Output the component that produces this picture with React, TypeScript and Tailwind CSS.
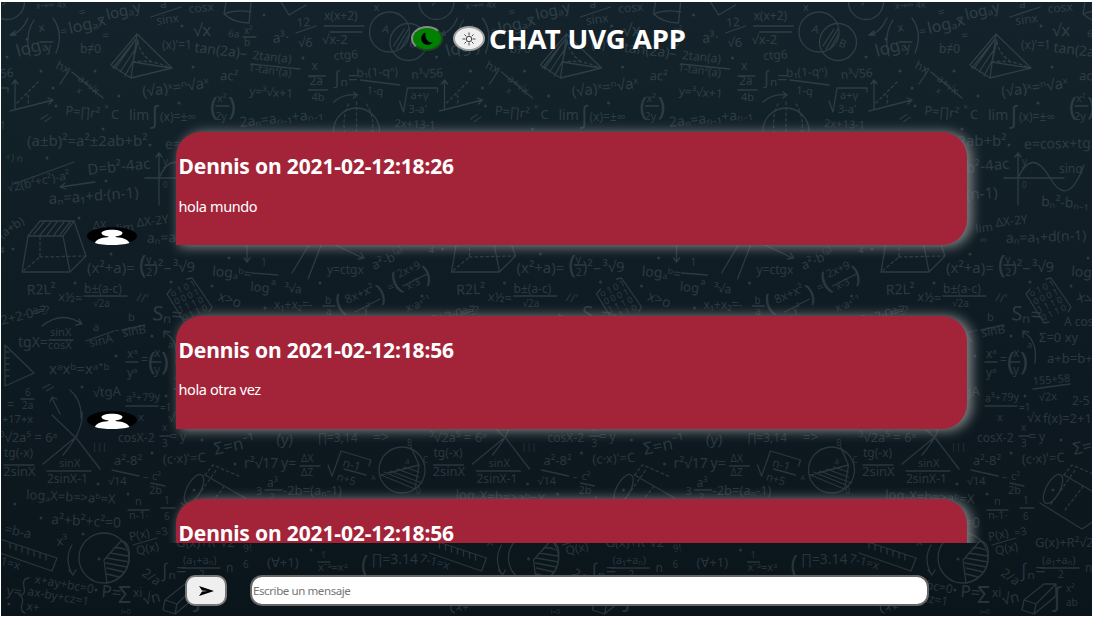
import React from "react";

type Note = [x: number, y: number, text: string, size?: number, rotate?: number];

const NOTES: Note[] = [
  [36, 9, "x→∞  4x", 9, -3],
  [18, 57, "logₐ", 17, -16], [39, 32, "x", 12, -10], [46, 52, "y", 12, -10], [61, 36, "=", 12, -12],
  [70, 34, "logₐx", 16, -14], [99, 22, "- logₐy", 15, -14],
  [80, 53, "b≠0", 12], [160, 8, "a", 12], [157, 25, "sinx", 12, -8], [189, 13, "cosx", 12, -5],
  [193, 36, "√x", 17], [162, 49, "(x)'=1", 12], [194, 52, "tan(2a)–", 14, 7],
  [252, 59, "2tan(a)", 12, 6], [248, 71, "1-tan²(a)", 11, 8], [228, 37, "6a", 10, 3], [244, 34, "x²", 10], [244, 46, "b", 10],
  [273, 43, "a³·", 14, -5], [297, 27, "12", 12, -5], [298, 47, "√6", 13], [324, 20, "x(x+2)", 12], [322, 44, "√x-2", 13], [334, 60, "ctg6", 12, -4],
  [803, 11, "x", 11], [741, 70, "x", 12], [739, 85, "2a", 12], [741, 101, "4b", 11],
  [763, 84, "∫ₙ=", 18], [786, 77, "b₁(1-qⁿ)", 12, -2], [796, 94, "1-q", 11, 4], [841, 79, "n³√56", 12, -4],
  [840, 99, "a+γ", 11], [838, 113, "3-a'", 11], [824, 127, "2x+13-1", 11, 3],
  [811, 32, "A", 11, 15], [838, 46, "B", 11, 20],
  [55, 68, "hx", 12, 25], [77, 80, "a+√x", 11, 38], [76, 92, "x", 9, 30], [104, 110, "×", 9],
  [143, 97, "(√a)ˣ=ⁿ√aˣ", 15, -8], [220, 80, "ac²", 13, 2], [249, 95, "y=³√x+1", 12, 4],
  [210, 115, "(", 26], [217, 102, "x²", 11], [215, 120, "2y", 11], [228, 115, ")", 26],
  [65, 115, "P=∏r²", 13, 5], [111, 119, "C", 13], [129, 120, "lim", 14], [150, 123, "∫", 24], [160, 121, "(x)=±∞", 12],
  [240, 127, "2aₙ=aₙ₋₁+aₙ₋₁", 14, -6],
  [27, 146, "(a±b)²=a²±2ab+b²", 15], [165, 149, "e=cosx+tgx", 14, -1], [88, 175, "D=b²-4ac", 15, -6],
  [8, 192, "√2(b²+c²)-a²", 12, -12], [49, 204, "aₙ=a₁+d·(n-1)", 15, -4], [163, 165, "y", 10], [163, 188, "0", 8], [200, 173, "sinα", 12],
  [182, 206, "bₙ²-bₙ₋₁", 14, 3], [5, 160, "÷)  n", 10, 8],
  [2, 239, "(a+b)", 12, -35], [93, 229, "ΔX", 11], [117, 233, "lim", 12, -8], [137, 227, "ΔX-2Y", 12, -7], [121, 244, "∞", 11],
  [147, 243, "aₙ=a₁+d(n-1)", 14, -2],
  [87, 273, "(x²+a)=", 15], [139, 273, "(", 25], [146, 263, "y", 11], [146, 276, "2", 11], [153, 273, ")²–", 16], [173, 272, "³√9", 15],
  [212, 276, "logₐᵇ=", 14, 4], [261, 266, "1", 10], [250, 291, "log", 13, 5], [271, 285, "a", 9], [284, 292, "³√a", 12, 5],
  [327, 274, "y=ctgx", 12], [374, 270, "a²-b⁽ˣ⁾", 13, -24], [339, 313, "(", 26, -20], [347, 304, "8x+x²", 12, -24], [364, 313, "y²", 10, -20], [380, 302, ")", 24, -20], [389, 292, "=", 12, -20],
  [396, 291, "(", 26, -25], [399, 278, "2x+9", 11, -25], [408, 290, "x-3", 10, -25], [425, 283, ")", 24, -15], [429, 259, "⁴", 14],
  [274, 309, "x₁+x₂=-", 12], [325, 304, "b", 10], [326, 315, "a", 10], [217, 300, "x>o", 14, 20], [407, 312, "x·aˣ⁻¹", 11, -20], [32, 314, "a=?", 11],
  [27, 295, "R2L²", 14, -3], [58, 301, "x½=", 13, 4], [84, 293, "b±(a-c)", 12], [93, 307, "√2a", 10],
  [152, 320, "Sₙ=", 20, 4], [2, 325, "2+2·0=?", 13, -14],
  [18, 347, "tgX=", 14], [50, 336, "sinX", 11], [48, 349, "cosX", 11], [93, 331, "a", 11], [90, 347, "sinA", 12, -12],
  [115, 334, "-", 12], [128, 321, "b", 11], [123, 337, "sinB", 12, -10],
  [205, 326, "A  cos", 12], [180, 342, "Σ=0  xy", 13], [188, 363, "a+b=b+a", 13], [174, 385, "155+58", 11, -5], [180, 401, "√2x", 11, -3], [213, 405, "2-5", 12],
  [127, 358, "xᵃ", 12], [127, 377, "yᵃ", 12], [141, 364, "=", 12], [148, 370, "(", 26], [154, 357, "x", 12], [154, 374, "y", 12], [161, 370, ")", 26], [168, 352, "ᵃ", 14],
  [49, 374, "xᵃxᵇ=xᵃ⁺ᵇ", 15], [25, 396, "6", 10], [22, 409, "2a", 10], [93, 397, "√tgA", 13, -3], [126, 402, "a³+79y", 11, -3], [160, 411, "=1", 10],
  [2, 423, "+17+x", 11], [0, 442, "³√2a⁵ = 6ᵃ", 13], [92, 450, "|||", 9], [118, 442, "cosX-2", 12], [162, 431, "x", 10], [162, 447, "3", 10], [170, 441, "= y", 12],
  [138, 421, "x", 11], [184, 423, "f(x)=2+1", 13], [168, 422, "√x", 13],
  [215, 455, "Σ=n⁻¹", 17, -12], [276, 444, "(y)", 15, 5], [318, 442, "∏=3,14", 12], [373, 442, "=>", 14],
  [4, 457, "tg(-x)", 12], [3, 476, "2sinX", 13], [59, 467, "sinX", 11], [47, 483, "2sinX-1", 12],
  [114, 465, "a²-8²", 13], [108, 485, "√14", 11], [143, 480, "–", 10], [152, 480, "c²", 11], [149, 494, "2b", 11], [163, 464, "(c·x)'=C", 13, -3],
  [244, 468, "r²√17", 14], [281, 468, "y=", 14], [301, 462, "ΔX", 10], [301, 476, "ΔZ", 10], [342, 466, "n-1", 12, 17], [336, 480, "n+5", 11, 17],
  [256, 495, "3", 11], [267, 487, "a³", 12], [269, 501, "2", 10], [283, 495, "-2b=(aₙ-1)", 13],
  [371, 480, "A", 7], [407, 446, "B", 8], [423, 463, "C", 8], [405, 464, "a", 8], [416, 494, "0", 8],
  [26, 499, "logₐX=b=>aᵇ=X", 13, 3], [135, 505, "n", 11], [129, 519, "n-1·", 11], [164, 504, "1", 10], [164, 520, "6", 10],
  [51, 524, "a²+b²+c²=0", 14, 3], [4, 533, "=b-a", 13, 12], [57, 546, "x³", 13, -8],
  [130, 541, "P(x)", 12, -12], [137, 555, "Q(x)", 12, -12], [156, 537, "=3", 11, -12], [176, 547, "G(x)+R²√2", 13],
  [161, 577, "∫ₙ=", 19], [183, 564, "(a₁+aₙ)", 11], [199, 578, "2", 10], [226, 572, "n", 12], [141, 575, "2/a", 13, 35],
  [244, 552, "9!", 10, -10], [243, 568, "6", 10], [267, 567, "(∀+1)", 13], [321, 558, "1", 9], [318, 571, "x⁻ᵃ=xᵃ", 11], [361, 573, "(", 25],
  [372, 564, "∏=3.14", 14], [419, 562, "7-1=x", 12, 15],
  [6, 595, "y=", 14, 8], [34, 583, "x+ay+bc=0", 12, 10], [27, 595, "ax-by+cz=1", 12, 10], [26, 610, "x+", 12, 8],
  [101, 597, "P=", 17, 5], [118, 603, "Σ", 23], [133, 597, "xi", 12], [121, 614, "i=0", 7], [144, 605, "√n", 15, -12], [193, 606, "∫", 26], [207, 592, "x²", 10], [207, 606, "ab", 10],
  [7, 409, "=", 12], [103, 40, "=", 12, -10], [40, 119, "//", 12, 35], [42, 388, "//", 12, 40], [136, 301, "//'", 12, 10], [80, 17, "=", 12, -15],
];

const DOTS: [number, number][] = [
  [27, 39], [7, 57], [41, 71], [53, 88], [56, 106], [95, 71], [119, 96], [182, 26], [193, 67], [264, 15], [303, 58], [179, 103], [103, 129], [47, 158],
  [150, 145], [106, 181], [79, 218], [13, 249], [111, 254], [75, 283], [171, 282], [212, 286], [229, 258], [320, 283], [422, 296], [265, 308], [152, 336],
  [116, 356], [82, 387], [166, 396], [202, 440], [235, 464], [152, 453], [98, 484], [15, 504], [128, 494], [41, 518], [194, 490], [83, 534], [96, 590], [9, 604], [311, 550], [99, 559],
];

const STROKES =
  "M28 18Q22 32 11 35M15 31l-5 4 6 0M137 34L111 65 131 78 172 68ZM137 34L131 78M134 42l-19 27M136 39l-23 29M134 51l-14 21M133 61l-8 15M138 40L133 62 171 68M151 17L181 7M251 64L300 69M243 37h13M296 33l20-7M324 26h40M330 32h32M226 2l-2 12q10 9 25 9l2-20M224 14q12-5 27-2M281 2l8 13 17-10M40 42h13M34 20q-10 15-4 36M53 18q11 15 3 35" +
  "M15 109L15 81M12 84l3-4 3 4M10 111L53 100M48 98l5 2-4 4M738 76h17M738 90h19M790 80L829 85M829 101l4 11 4-24 30 0 0 4M763 102q10-9 24-7M783 92l4 3-4 3M70 69l-10 15M72 72l31 26M216 106h13" +
  "M95 182L60 187M65 183l-5 4 6 2M159 205V153M156 157l3-4 3 4M145 178h60M159 178Q173 147 191 178T225 165M14 184L74 162" +
  "M28 236H63L74 221H40ZM28 236L22 272H70L63 236M70 272L86 256 74 221M34 234l10-12M40 235l11-13M47 235l10-13M54 235l10-13M60 235l10-13M145 265h10M252 273L278 275M247 230V262M244 258l3 4 3-4M292 273l18-30M308 279l17-44M325 240l38 18M358 259l6-1-3-5M355 312l25-13M403 286l24-12M323 306h12M84 296h43" +
  "M42 326Q62 310 82 324M79 319l3 5-6 1M49 340h24M86 341l28-10M122 330l23-5M126 362h12M151 362h10M5 345L34 373 5 386ZM6 352h3M6 358h3M6 364h3M6 370h3M6 376h3M21 399h13M126 406h32M164 332q15 8 12 31M164 337v-6l6 1M174 389l37-5M70 390q12 10 11 28M52 398l8 16M50 402l2-5 5 2" +
  "M52 415L77 439 100 469M82 412Q84 430 63 455M77 436L43 464M160 436h11M4 465h30M47 471h44M112 470l27 6M151 483l14 3M300 466h20M328 465l4 11 9-25 30 9-2 6M344 469l22 6M265 490h17M128 510h21M161 508h14M133 545l24-7M318 562h12M182 568h38M29 578q-7 0-5 9t-5 8q5 2 3 9t3 9" +
  "M0 539L57 558 52 571 0 553M10 543v5M16 545v5M22 547v5M28 549v5M34 551v5M40 553v5M46 555v5M104 560L121 541M104 560L107 583M107 583Q127 578 129 560T121 541M114 548q7-1 12 2M110 553l18 3M107 558l22 4M106 563l21 4M107 568l17 4M107 574l12 3M72 545q-8 14 0 29M69 570l4 5 3-5" +
  "M205 475L245 498M181 503L223 529M245 498q2 17-22 31M381 475L415 489M381 475l38-10M411 447l8 18-4 24M384 472l35 14M390 471l32 12M397 469l22 8M404 467l15 5M165 600l20-16 12 0 0 12-22 18-12-4ZM165 600l12 4 20-20M177 604l-2 10";

const MATRIX = ["o101", "0001", "1110", "0110"];

function Doodles() {
  return (
    <svg className="absolute inset-0 h-full w-full" viewBox="1 2 1091 614" aria-hidden="true">
      <defs>
        <g id="formulas" fill="none" stroke="#899a9e" strokeWidth="1.3" strokeLinecap="round" strokeLinejoin="round">
          <path d={STROKES} />
          <circle cx="7" cy="2" r="17.5" />
          <circle cx="-40" cy="32" r="20" />
          <circle cx="-21" cy="42" r="18.5" />
          <path d="M-36 46l11-17M-33 49l12-20M-29 49l8-14" />
          <path d="M-96 131a23 23 0 1 1 46 0" />
          <circle cx="104" cy="558" r="25" />
          <circle cx="402" cy="470" r="23" />
          <ellipse cx="194" cy="489" rx="7" ry="16" transform="rotate(28 194 489)" />
          <g strokeDasharray="2.5 3">
            <path d="M17 103L38 82M28 103q2-6-2-10M138 42q2 12 14 20M133 62q20-3 37 6M-81 104q-6 12-4 28M-73 102v30M-63 104q8 12 6 28M40 237v20L22 272M40 257l45-1M205 475l8-10 28 12M192 504l25-35M206 510l20-26M3 5l9-9" />
          </g>
          <path d="M171 289l-4 5 18 29 5-1M187 279l5-1 20 29-3 5" />
          <g fill="#899a9e" stroke="none" style={{ fontFamily: '"Noto Sans", "Open Sans", "DejaVu Sans", sans-serif' }}>
            {NOTES.map(([x, y, text, size = 12, rotate = 0], i) => (
              <text key={i} x={x} y={y} fontSize={size} transform={`rotate(${rotate} ${x} ${y})`}>{text}</text>
            ))}
            {MATRIX.map((row, i) => (
              <text key={i} x={172 + i * 4} y={297 + i * 8} fontSize="9" letterSpacing="2" transform={`rotate(-25 ${172 + i * 4} ${297 + i * 8})`}>{row}</text>
            ))}
            {DOTS.map(([x, y], i) => <circle key={i} cx={x} cy={y} r="1.5" />)}
          </g>
        </g>
      </defs>
      <g opacity="0.23">
        {[-859, -429.5, 0, 429.5, 859].map((x) => <use key={x} href="#formulas" x={x} />)}
      </g>
    </svg>
  );
}

function Avatar() {
  return (
    <svg className="h-[18px] w-[50px] shrink-0" viewBox="0 0 50 18">
      <ellipse cx="25" cy="9" rx="25" ry="9" fill="#000" />
      <path d="M8 16C9 12.5 14 10.5 20.5 10.2L22 9.6C17 9 14.5 7.5 14.5 6C14.5 4 19 2.7 25 2.7S35.500 4 35.500 6C35.500 7.500 33 9 28 9.600L29.500 10.200C36 10.500 41 12.500 42.500 16C38 17.500 31 18 25 18S12 17.500 8 16Z" fill="#fff" />
    </svg>
  );
}

function Message({ title, body }: { title: string; body: string }) {
  return (
    <article className="flex h-[113px] shrink-0 items-end gap-[39px] pl-[86px]">
      <Avatar />
      <div className="h-full w-[791px] rounded-[25px] rounded-bl-none bg-[#a32439] pl-[2.500px] pt-[19.400px] text-white shadow-[4px_1px_12px_1px_#808586]">
        <h2 className="h-[30px] whitespace-nowrap text-[21px] font-bold leading-[30px] tracking-[-0.140px]">{title}</h2>
        <p className="mt-[13.500px] text-[14.500px] leading-[22px] tracking-[-0.380px]">{body}</p>
      </div>
    </article>
  );
}

export default function App() {
  return (
    <div className="h-[618px] w-[1094px] overflow-hidden bg-white pl-px pt-[2px] font-['Noto_Sans','Open_Sans',sans-serif]">
      <main className="relative h-[614px] w-[1091px] overflow-hidden bg-linear-to-b from-[#14232b] to-[#0a141b]">
        <Doodles />
        <div className="relative flex h-full flex-col">
          <header className="flex h-[115px] shrink-0 items-start pl-[410px] pt-[24px]">
            <button aria-label="Dark mode" className="flex h-[25px] w-[32px] items-center justify-center rounded-[50%] border-2 border-t-[#8a8a8a] border-l-[#8a8a8a] border-r-[#1c4a1c] border-b-[#1c4a1c] bg-[#008000]">
              <svg className="h-[14px] w-[14px]" viewBox="0 0 14 14"><path d="M5.500 0.500C2 2 .5 5 1.500 8.500C3 13 9 14.500 12.800 10.500C8 11 4.500 6 5.500 .5Z" fill="#000" /></svg>
            </button>
            <button aria-label="Light mode" className="ml-[10px] flex h-[25px] w-[32px] items-center justify-center rounded-[50%] border-2 border-[#a0a0a0] bg-[#efefef]">
              <svg className="h-[14px] w-[14px]" viewBox="0 0 14 14" fill="none" stroke="#333" strokeWidth="0.9"><circle cx="7" cy="7" r="2.700" /><path d="M7 .5v3M7 10.500v3M.5 7h3M10.500 7h3M2.400 2.400l2 2M9.600 9.600l2 2M11.600 2.400l-2 2M4.400 9.600l-2 2" /></svg>
            </button>
            <h1 className="ml-[4px] -mt-[7px] whitespace-nowrap text-[27.500px] font-bold leading-[40px] tracking-[-0.050px] text-white">CHAT UVG APP</h1>
          </header>
          <section className="flex h-[426px] shrink-0 flex-col gap-[70.500px] overflow-hidden pt-[15px]">
            <Message title="Dennis on 2021-02-12:18:26" body="hola mundo" />
            <Message title="Dennis on 2021-02-12:18:56" body="hola otra vez" />
            <Message title="Dennis on 2021-02-12:18:56" body="" />
          </section>
          <footer className="flex items-start gap-[23px] pl-[184px] pt-[32px]">
            <button aria-label="Enviar" className="flex h-[31px] w-[42px] items-center justify-center rounded-[10px] border-2 border-[#777] bg-[#efefef]">
              <svg className="h-[12px] w-[17px]" viewBox="0 0 17 12"><path d="M1 1L16 6 1 11 4 6.600 10 6 4 5.400Z" fill="#000" /></svg>
            </button>
            <input aria-label="Mensaje" placeholder="Escribe un mensaje" className="h-[31px] w-[679px] rounded-[12px] border-2 border-[#666] bg-white px-px pb-px text-[11.500px] tracking-[-0.400px] text-black placeholder:text-[#757575]" />
          </footer>
        </div>
      </main>
    </div>
  );
}
